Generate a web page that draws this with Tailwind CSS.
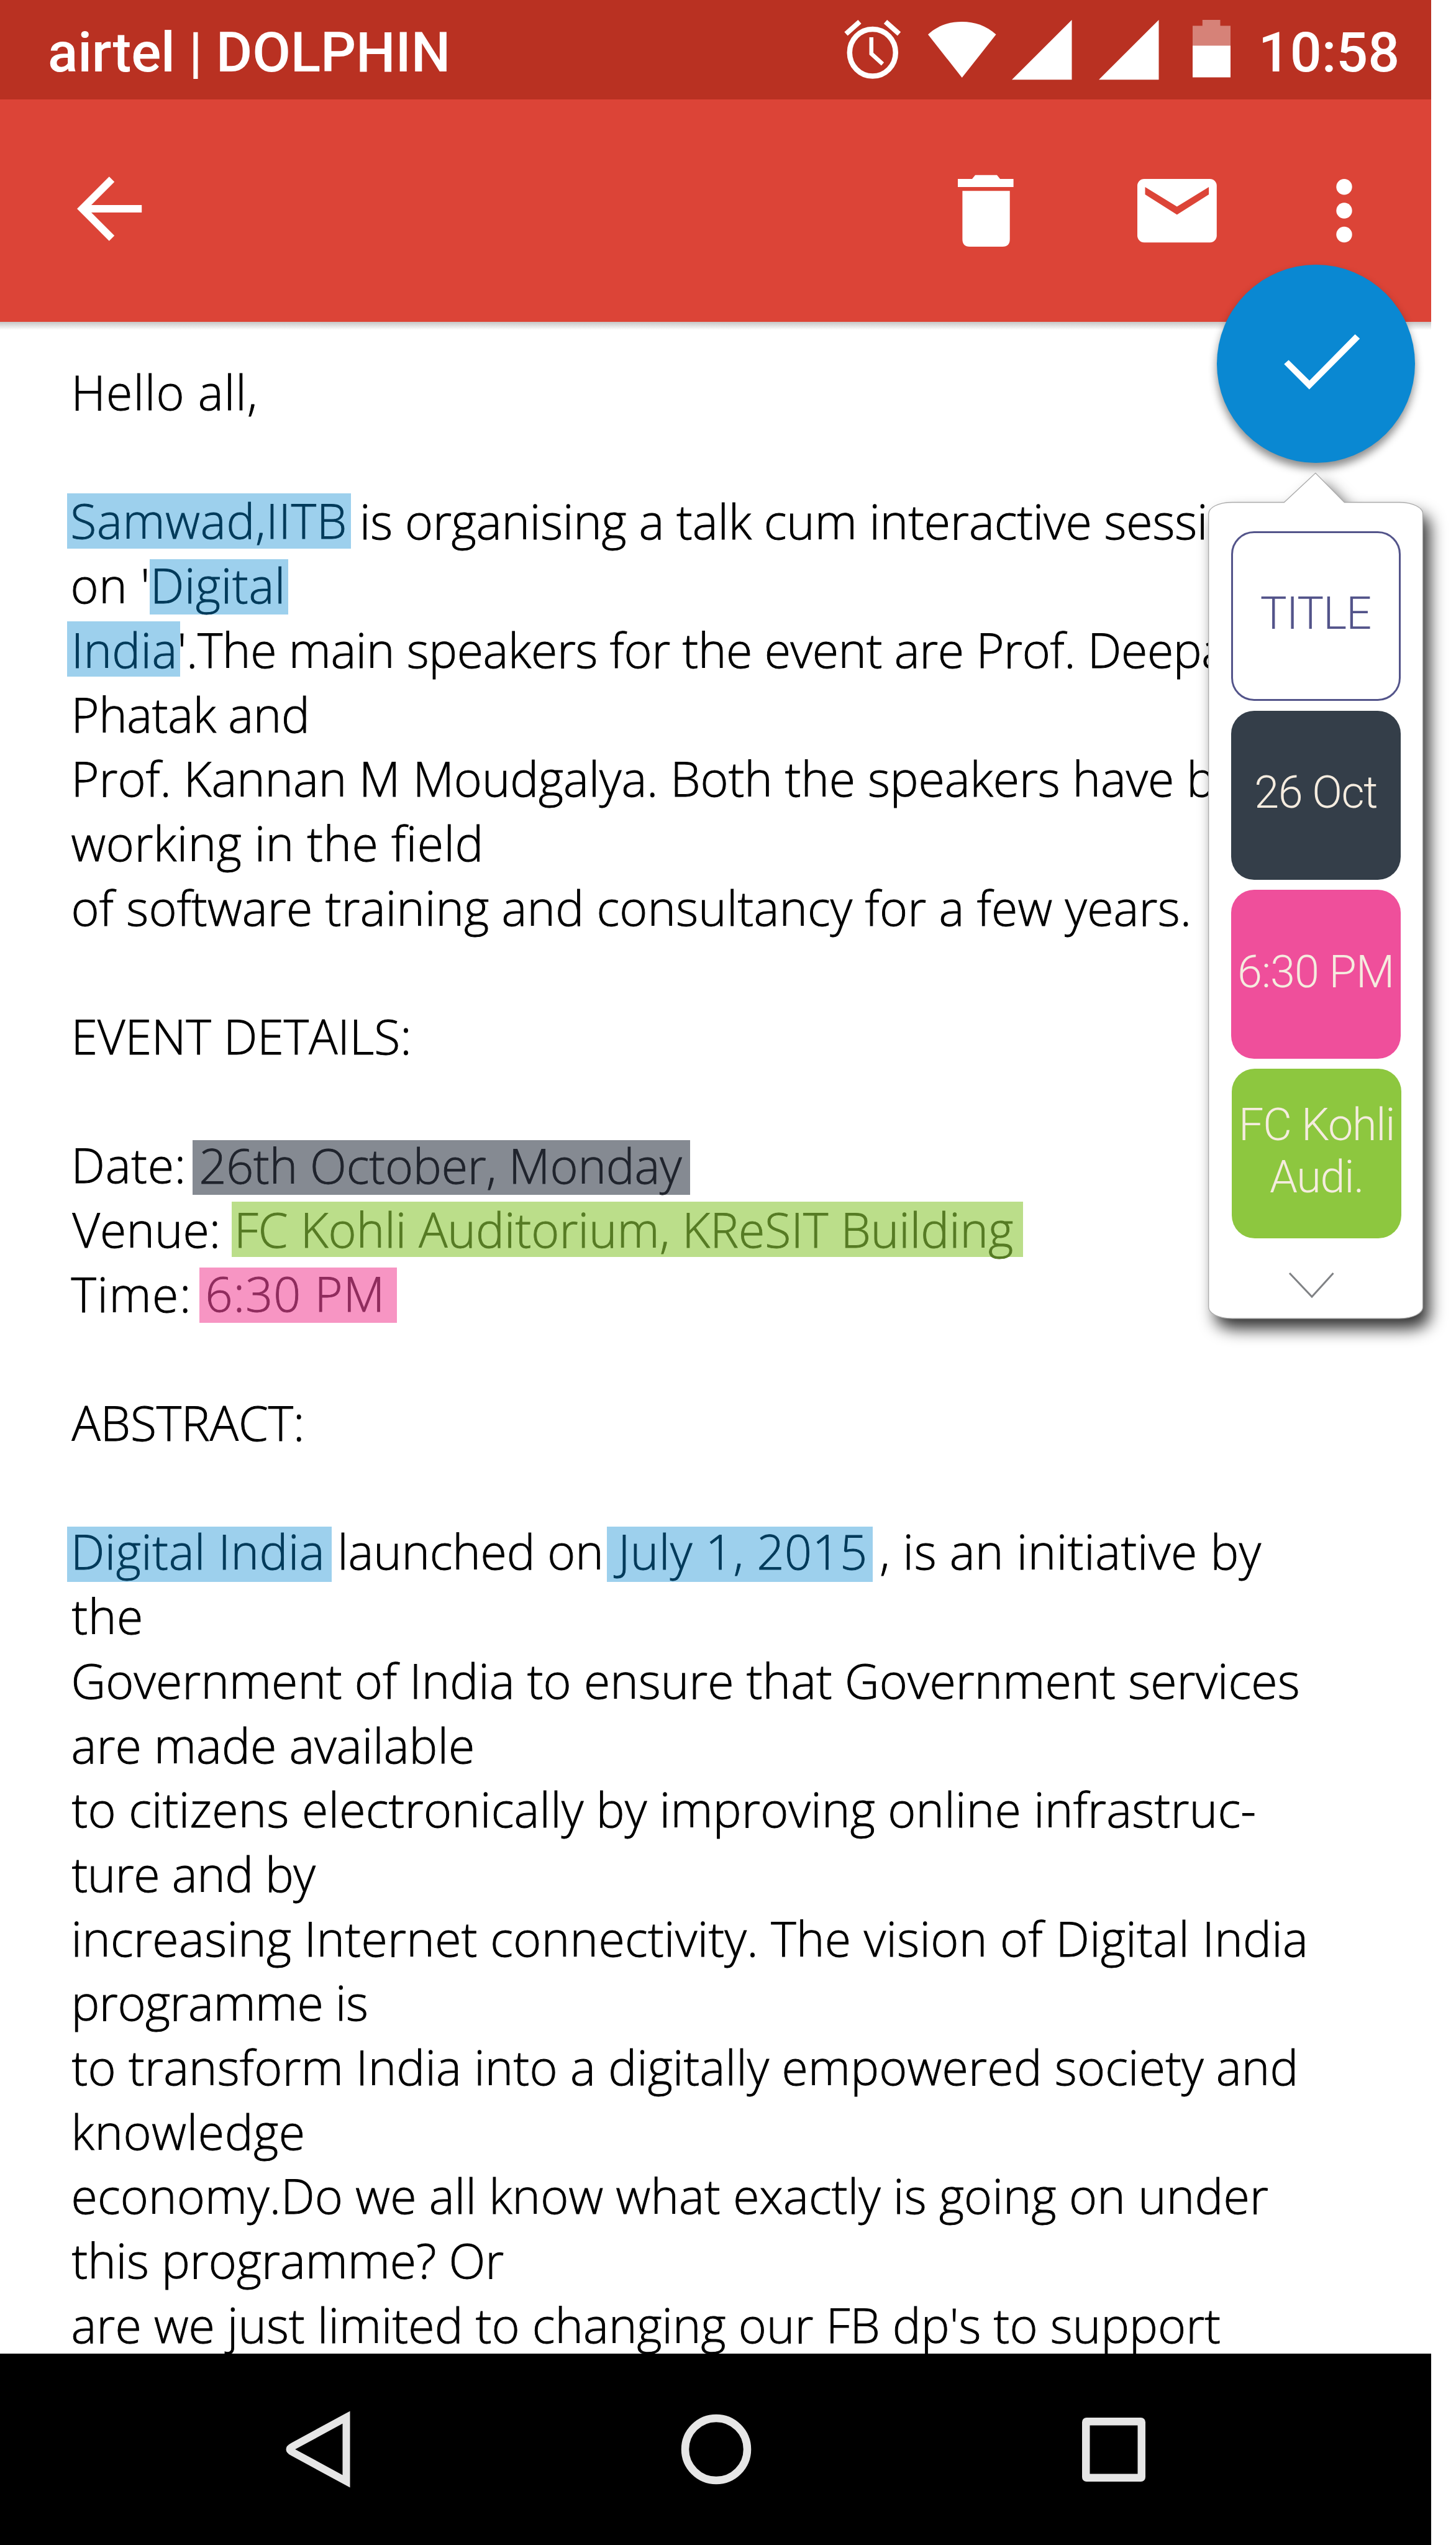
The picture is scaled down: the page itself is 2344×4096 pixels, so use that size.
<!DOCTYPE html>
<html lang="en">
<head>
<meta charset="utf-8">
<title>Mail</title>
<script src="https://cdn.jsdelivr.net/npm/@tailwindcss/browser@4"></script>
</head>
<body class="bg-white">
<div class="relative w-[2344px] h-[4096px] overflow-hidden bg-white">
<div class="w-[2304.3px] h-[4096px] flex flex-col">

  <!-- Status bar -->
  <div class="h-[160px] shrink-0 bg-[#b93122] flex items-start justify-between pl-[77px] pr-[51px] font-['Roboto',sans-serif] font-medium text-white text-[89.7px] leading-[169px] whitespace-nowrap">
    <span class="tracking-[-0.21px]">airtel | DOLPHIN</span>
    <div class="flex items-start">
      <svg class="w-[93px] h-[100px] mt-[32px]" viewBox="1358 32 93 100" fill="none" stroke="#fff">
        <ellipse cx="1404.8" cy="84.8" rx="37" ry="37.8" stroke-width="8.5"/>
        <path d="M1402.8 60V86.5L1421 103" stroke-width="6.5"/>
        <path d="M1362 54.5L1384 35M1425.5 35L1447.5 54.5" stroke-width="8"/>
      </svg>
      <svg class="w-[110px] h-[90px] mt-[35px] ml-[43px]" viewBox="1494 35 110 90" fill="#fff"><path d="M1548.7 125L1494 55.5C1510 41 1528 35 1548.7 35C1569 35 1587.500 41 1603.500 55.500Z"/></svg>
      <svg class="w-[97px] h-[97px] mt-[32px] ml-[24.500px]" viewBox="0 0 97 97" fill="#fff"><path d="M0 96.300L96.500 0V96.300Z"/></svg>
      <svg class="w-[97px] h-[97px] mt-[32px] ml-[43px]" viewBox="0 0 97 97" fill="#fff"><path d="M0 96.300L96.500 0V96.300Z"/></svg>
      <svg class="w-[61px] h-[93px] mt-[32px] ml-[54.500px]" viewBox="0 0 61 93"><path d="M15.800 0H44.500V9.500H61V42H0V9.500H15.800Z" fill="#d68278"/><path d="M0 41.500H61V92.500H0Z" fill="#fff"/></svg>
      <span class="ml-[44.300px]">10:58</span>
    </div>
  </div>

  <!-- Toolbar -->
  <div class="h-[358.400px] shrink-0 bg-[#dc4437] flex items-start pt-[121px] pl-[123px]">
    <svg class="w-[106px] h-[110px]" viewBox="122 281 106 110" fill="none" stroke="#fff" stroke-width="12"><path d="M179 288.400L131.500 336L179 383.600M130 336H227.200"/></svg>
    <svg class="w-[90px] h-[117px] ml-[1313px]" viewBox="1542 281 90 117" fill="#fff"><path d="M1542 288H1565L1570 281.800H1605L1610 288H1631.600V301H1542ZM1549.400 307.200H1625.700V385Q1625.700 397 1614 397H1561Q1549.400 397 1549.400 385Z"/></svg>
    <svg class="w-[128px] h-[103px] mt-[7px] ml-[198.500px]" viewBox="1830.500 288 128 103"><rect x="1830.500" y="288" width="127.800" height="102.300" rx="11" fill="#fff"/><path d="M1843 301L1894.300 332.600L1945.600 301V313L1894.300 345.600L1843 313Z" fill="#dc4437"/></svg>
    <svg class="w-[26px] h-[104px] mt-[6px] ml-[192px]" viewBox="2150 287 26 104" fill="#fff"><circle cx="2163" cy="300.700" r="12.700"/><circle cx="2163" cy="339" r="12.700"/><circle cx="2163" cy="377.500" r="12.700"/></svg>
  </div>
  <div class="h-[13px] shrink-0 bg-linear-to-b from-[#c6c6c6] to-white"></div>

  <!-- Message -->
  <main class="grow overflow-hidden pt-[48px] pl-[114.500px] font-['Open_Sans',sans-serif] font-light [-webkit-text-stroke:0.9px] text-[77px] leading-[103.680px] text-black whitespace-nowrap">
    <p class="h-[103.680px] tracking-[1.100px]">Hello all,</p>
    <p class="h-[103.680px]"></p>
    <p class="h-[103.680px] flex items-start"><span class="ml-[-7px] mt-[7.500px] w-[457.500px] h-[88.800px] pl-[5.700px] leading-[88.700px] tracking-[0.790px] bg-[#9dd0ed] text-[#003a5a]">Samwad,IITB</span><span class="ml-[13.900px] tracking-[-0.090px]">is organising a talk cum interactive session</span></p>
    <p class="h-[103.680px] flex items-start"><span class="w-[126.200px] ml-[-1px] mr-[1px] tracking-[0.700px]">on '</span><span class="mt-[9.900px] w-[223.400px] h-[88.800px] pl-[1.200px] leading-[83.900px] tracking-[0.730px] bg-[#9dd0ed] text-[#003a5a]">Digital</span></p>
    <p class="h-[103.680px] flex items-start"><span class="ml-[-7px] mt-[5.900px] w-[182.400px] h-[88.800px] pl-[7.200px] leading-[91.900px] tracking-[0.400px] bg-[#9dd0ed] text-[#003a5a]">India</span><span class="ml-[-4.300px] tracking-[-0.350px]">'.The main speakers for the event are Prof. Deepak</span></p>
    <p class="h-[103.680px] tracking-[-0.320px]">Phatak and</p>
    <p class="h-[103.680px] tracking-[-0.060px]">Prof. Kannan M Moudgalya. Both the speakers have been</p>
    <p class="h-[103.680px] tracking-[0.550px]">working in the field</p>
    <p class="h-[103.680px] tracking-[0.190px]">of software training and consultancy for a few years.</p>
    <p class="h-[103.680px]"></p>
    <p class="h-[103.680px]">EVENT DETAILS:</p>
    <p class="h-[103.680px]"></p>
    <p class="h-[103.680px] flex items-start"><span class="w-[195.300px] tracking-[0.770px]">Date:</span><span class="mt-[11.100px] w-[800.900px] h-[88.800px] pl-[10.600px] leading-[81.500px] tracking-[-0.100px] bg-[#858a92] text-[#20242d]">26th October, Monday</span></p>
    <p class="h-[103.680px] flex items-start"><span class="w-[256.400px] ml-[2px] tracking-[0.070px]">Venue:</span><span class="mt-[7.300px] w-[1274px] h-[89px] pl-[4.100px] leading-[89.100px] tracking-[0.070px] bg-[#bbde8a] text-[#567b24]">FC Kohli Auditorium, KReSIT Building</span></p>
    <p class="h-[103.680px] flex items-start"><span class="w-[206.500px] tracking-[1.600px]">Time:</span><span class="mt-[9.600px] w-[317.700px] h-[89px] pl-[9.600px] leading-[84.500px] tracking-[1.140px] bg-[#f795c3] text-[#8f2c5d]">6:30 PM</span></p>
    <p class="h-[103.680px]"></p>
    <p class="h-[103.680px] tracking-[-0.070px] pl-[1px]">ABSTRACT:</p>
    <p class="h-[103.680px]"></p>
    <p class="h-[103.680px] flex items-start"><span class="ml-[-7px] mt-[12px] w-[426.800px] h-[88.800px] pl-[6.400px] leading-[79.700px] tracking-[0.560px] bg-[#9dd0ed] text-[#003a5a]">Digital India</span><span class="ml-[8.900px] w-[434.300px] tracking-[-0.130px]">launched on</span><span class="mt-[12px] w-[428px] h-[88.800px] pl-[17.700px] leading-[79.700px] tracking-[0.690px] bg-[#9dd0ed] text-[#003a5a]">July 1, 2015</span><span class="ml-[10.400px] tracking-[0.600px]">, is an initiative by</span></p>
    <p class="h-[103.680px] tracking-[0.650px] pl-[1px]">the</p>
    <p class="h-[103.680px] tracking-[0.080px]">Government of India to ensure that Government services</p>
    <p class="h-[103.680px] tracking-[0.100px]">are made available</p>
    <p class="h-[103.680px] tracking-[0.270px] pl-[1px]">to citizens electronically by improving online infrastruc-</p>
    <p class="h-[103.680px] tracking-[-0.440px] pl-[1px]">ture and by</p>
    <p class="h-[103.680px] tracking-[0.360px]">increasing Internet connectivity. The vision of Digital India</p>
    <p class="h-[103.680px] tracking-[-0.460px]">programme is</p>
    <p class="h-[103.680px] tracking-[0.200px] pl-[1px]">to transform India into a digitally empowered society and</p>
    <p class="h-[103.680px] tracking-[0.660px]">knowledge</p>
    <p class="h-[103.680px] tracking-[0.180px]">economy.Do we all know what exactly is going on under</p>
    <p class="h-[103.680px] pl-[1px]">this programme? Or</p>
    <p class="h-[103.680px] tracking-[0.080px]">are we just limited to changing our FB dp's to support</p>
    <!-- tops of the letters of the next line, above the navigation bar -->
    <svg class="w-[1920px] h-[4px] mt-[-6.500px]" viewBox="114.500 0 1920 4" fill="#222"><path d="M384 1h9v3h-9zM1121 1h9v3h-9zM1144 1h9v3h-9zM1240 1h9v3h-9zM1264 1h9v3h-9zM1631 1h7v3h-7zM1952 1h6v3h-6zM2000 1h6v3h-6z"/></svg>
  </main>

  <!-- Navigation bar -->
  <div class="h-[308px] shrink-0 bg-black flex items-start pt-[90px] pl-[456px]">
    <svg class="w-[110px] h-[128px]" viewBox="456 3878 110 128" fill="none" stroke="#e6e6e6" stroke-width="12"><path d="M557.500 3890.500L471 3937.500Q462 3942 471 3946.500L557.500 3993.500Z"/></svg>
    <svg class="w-[116px] h-[116px] mt-[6px] ml-[528.500px]" viewBox="0 0 116 116" fill="none" stroke="#e6e6e6" stroke-width="12.500"><circle cx="58" cy="58" r="50"/></svg>
    <svg class="w-[102px] h-[103px] mt-[13px] ml-[531px]" viewBox="0 0 102 103" fill="none" stroke="#e6e6e6" stroke-width="12.500"><rect x="6.250" y="6.250" width="89.500" height="90.500" rx="1"/></svg>
  </div>
</div>

<!-- Confirm button -->
<div class="absolute left-[1958.500px] top-[425.700px] size-[319px] rounded-full bg-[#0a88d2] shadow-[0_9px_14px_rgba(0,0,0,0.45)]">
  <svg class="size-full" viewBox="0 0 319 319" fill="#fff"><path d="M108.200 160.100L115.500 153.600L149.100 186.600L222.500 111.900L230.200 119L148.800 200.700Z"/></svg>
</div>

<!-- Detected details popover -->
<svg class="absolute left-[1880px] top-[720px] w-[464px] h-[1480px]" viewBox="1880 720 464 1480">
  <defs><filter id="sh" filterUnits="userSpaceOnUse" x="1880" y="720" width="464" height="1480"><feGaussianBlur stdDeviation="13"/></filter></defs>
  <path d="M1983.700 808.500H2067.300L2117.800 761.400L2164.400 808.500H2252.500C2275 808.500 2290.500 817 2290.500 827V2103.500C2290.500 2113.500 2275 2122 2252.500 2122H1983.700C1961 2122 1945.700 2113.500 1945.700 2103.500V827C1945.700 817 1961 808.500 1983.700 808.500Z" transform="translate(11 17)" filter="url(#sh)" fill="#000" fill-opacity="0.800"/>
  <path d="M1983.700 808.500H2067.300L2117.800 761.400L2164.400 808.500H2252.500C2275 808.500 2290.500 817 2290.500 827V2103.500C2290.500 2113.500 2275 2122 2252.500 2122H1983.700C1961 2122 1945.700 2113.500 1945.700 2103.500V827C1945.700 817 1961 808.500 1983.700 808.500Z" fill="#fff" stroke="#aaa" stroke-width="1.300"/>
</svg>
<div class="absolute left-[1945.700px] top-[809px] w-[344.800px] h-[1313px] pt-[46.400px] flex flex-col items-center gap-[15.800px] font-['Roboto',sans-serif] font-light text-[71.900px] leading-[84px] text-center text-[#f5ecdf] whitespace-nowrap">
  <div class="w-[273px] h-[272.500px] shrink-0 rounded-[37px] border-[3.500px] border-[#53548a] text-[#53548a] pb-[7px] flex items-center justify-center tracking-[-0.860px]">TITLE</div>
  <div class="w-[273px] h-[272.500px] shrink-0 rounded-[37px] bg-[#343e49] pb-[7px] flex items-center justify-center tracking-[-1.410px]">26 Oct</div>
  <div class="w-[273px] h-[272.500px] shrink-0 rounded-[37px] bg-[#ef4f9b] pb-[7px] flex items-center justify-center tracking-[-0.920px]">6:30 PM</div>
  <div class="w-[273px] h-[272.500px] shrink-0 ml-[3px] rounded-[37px] bg-[#8dc73f] pb-[7px] flex items-center justify-center tracking-[-1.250px]"><span>FC Kohli<br>Audi.</span></div>
  <svg class="w-[76px] h-[46px] shrink-0 mt-[37px] mr-[12px]" viewBox="0 0 76 46" fill="none" stroke="#808285" stroke-width="3"><path d="M2 3L38 41L72.500 3"/></svg>
</div>
</div>
</body>
</html>
